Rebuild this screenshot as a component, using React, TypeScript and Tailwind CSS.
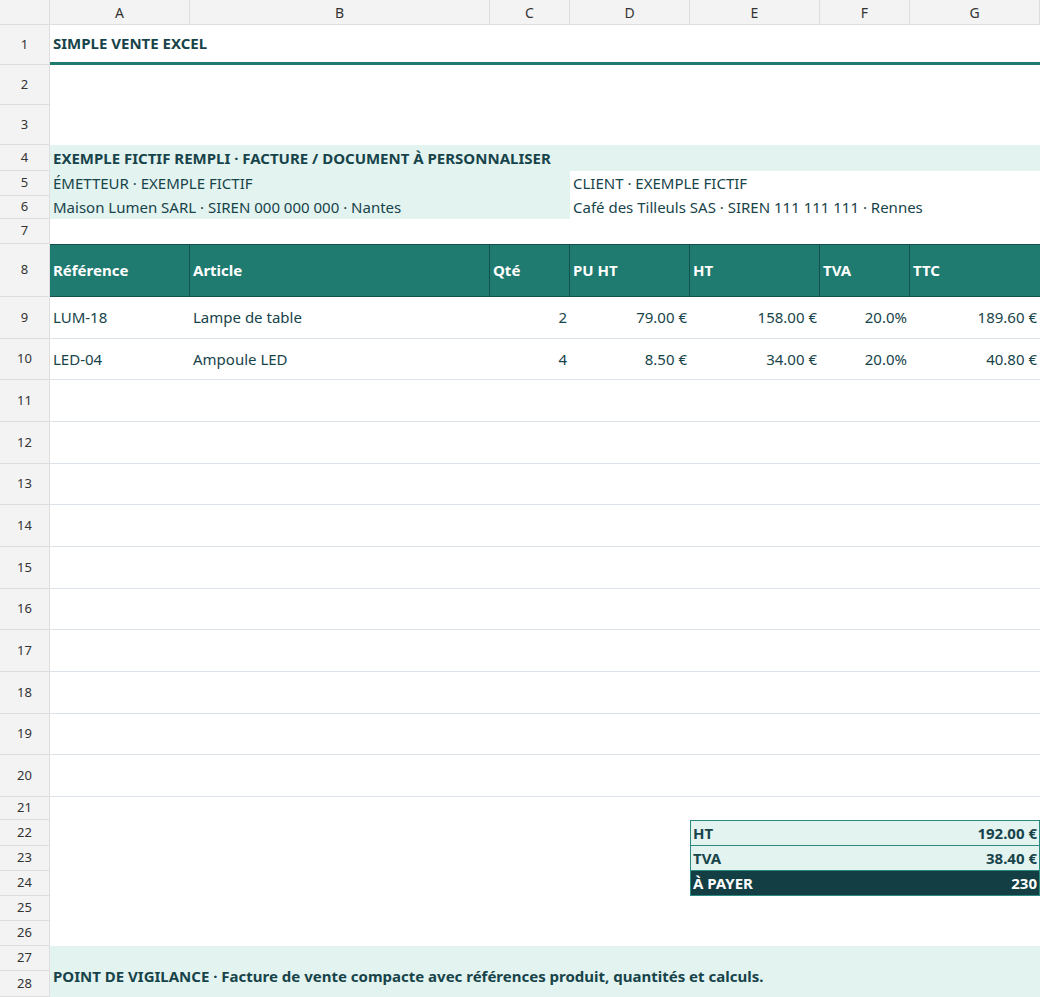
import React from "react";

const W = [140, 300, 80, 120, 130, 90, 130];
const H = [40, 40, 40, 26, 25, 23, 25, 53, 42, 41, 42, 42, 41, 42, 42, 41, 42, 42, 41, 42, 23, 26, 25, 25, 25, 25, 25, 26];
const cols = ["A", "B", "C", "D", "E", "F", "G"];

function Row({ n, children, className = "" }: { n: number; children?: React.ReactNode; className?: string }) {
  return (
    <div className="flex" style={{ height: H[n - 1] }}>
      <div className="w-[50px] shrink-0 bg-[#f3f3f3] border-r border-b border-[#dedede] flex items-center justify-center text-[13px] text-[#333] font-['Liberation_Sans',sans-serif]">
        {n}
      </div>
      <div className={"flex flex-1 min-w-0 " + className}>{children}</div>
    </div>
  );
}

function C({ w, children, className = "" }: { w: number; children?: React.ReactNode; className?: string }) {
  return (
    <div className={"shrink-0 flex items-center px-[3px] whitespace-nowrap overflow-visible " + className} style={{ width: w }}>
      {children}
    </div>
  );
}

export default function App() {
  const items = [
    ["LUM-18", "Lampe de table", "2", "79.00 €", "158.00 €", "20.0%", "189.60 €"],
    ["LED-04", "Ampoule LED", "4", "8.50 €", "34.00 €", "20.0%", "40.80 €"],
  ];
  const hdr = ["Référence", "Article", "Qté", "PU HT", "HT", "TVA", "TTC"];
  return (
    <div className="w-[1040px] h-[997px] overflow-hidden bg-white font-['Lato',sans-serif] text-[15px] text-[#17444a]">
      <div className="flex h-[25px]">
        <div className="w-[50px] bg-[#f3f3f3] border-r border-b border-[#dedede]" />
        {cols.map((c, i) => (
          <div key={c} style={{ width: W[i] }} className="bg-[#f3f3f3] border-r border-b border-[#dedede] flex items-center justify-center text-[14px] text-[#333] font-['Liberation_Sans',sans-serif]">
            {c}
          </div>
        ))}
      </div>
      <Row n={1} className="border-b-[3px] border-[#1f7a70]">
        <C w={990} className="font-bold">SIMPLE VENTE EXCEL</C>
      </Row>
      <Row n={2} />
      <Row n={3} />
      <Row n={4} className="bg-[#e3f3f0]">
        <C w={990} className="font-bold">EXEMPLE FICTIF REMPLI · FACTURE / DOCUMENT À PERSONNALISER</C>
      </Row>
      <Row n={5}>
        <C w={520} className="bg-[#e3f3f0]">ÉMETTEUR · EXEMPLE FICTIF</C>
        <C w={470}>CLIENT · EXEMPLE FICTIF</C>
      </Row>
      <Row n={6}>
        <C w={520} className="bg-[#e3f3f0]">Maison Lumen SARL · SIREN 000 000 000 · Nantes</C>
        <C w={470}>Café des Tilleuls SAS · SIREN 111 111 111 · Rennes</C>
      </Row>
      <Row n={7} />
      <Row n={8} className="bg-[#1f7a70] border-y border-[#14514c]">
        {hdr.map((h, i) => (
          <C key={h} w={W[i]} className={"font-bold text-white " + (i < 6 ? "border-r border-[#14514c]" : "")}>
            {h}
          </C>
        ))}
      </Row>
      {items.map((r, k) => (
        <Row key={k} n={9 + k} className="border-b border-[#dde3ea]">
          {r.map((v, i) => (
            <C key={i} w={W[i]} className={i >= 2 ? "justify-end" : ""}>
              {v}
            </C>
          ))}
        </Row>
      ))}
      {[11, 12, 13, 14, 15, 16, 17, 18, 19, 20].map((n) => (
        <Row key={n} n={n} className="border-b border-[#dde3ea]" />
      ))}
      <Row n={21} />
      <Row n={22}>
        <div className="w-[640px]" />
        <div className="flex-1 bg-[#e3f3f0] border border-[#2a8a80] flex items-center justify-between px-[2px] font-bold">
          <span>HT</span><span>192.00 €</span>
        </div>
      </Row>
      <Row n={23}>
        <div className="w-[640px]" />
        <div className="flex-1 bg-[#e3f3f0] border-x border-b border-[#2a8a80] flex items-center justify-between px-[2px] font-bold">
          <span>TVA</span><span>38.40 €</span>
        </div>
      </Row>
      <Row n={24}>
        <div className="w-[640px]" />
        <div className="flex-1 bg-[#133f44] border-x border-b border-[#2a8a80] flex items-center justify-between px-[2px] font-bold text-white">
          <span>À PAYER</span><span>230</span>
        </div>
      </Row>
      <Row n={25} />
      <Row n={26} />
      <div className="flex h-[51px]">
        <div className="w-[50px] shrink-0 flex flex-col">
          <div className="h-[25px] bg-[#f3f3f3] border-r border-b border-[#dedede] flex items-center justify-center text-[13px] text-[#333] font-['Liberation_Sans',sans-serif]">27</div>
          <div className="h-[26px] bg-[#f3f3f3] border-r border-b border-[#dedede] flex items-center justify-center text-[13px] text-[#333] font-['Liberation_Sans',sans-serif]">28</div>
        </div>
        <div className="flex-1 bg-[#e3f3f0] flex items-end pb-[10px] px-[3px] font-bold whitespace-nowrap">
          POINT DE VIGILANCE · Facture de vente compacte avec références produit, quantités et calculs.
        </div>
      </div>
    </div>
  );
}
